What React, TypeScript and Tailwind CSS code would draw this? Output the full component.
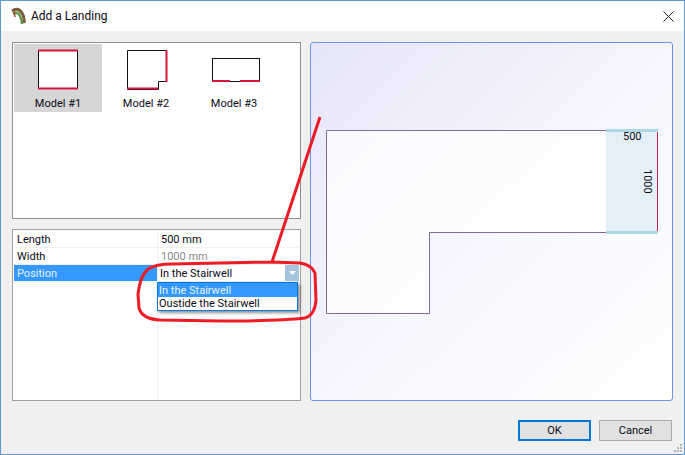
const font = { fontFamily: 'Roboto, "Noto Sans", sans-serif' };

function ModelIcon({ label, selected, children }: { label: string; selected?: boolean; children: React.ReactNode }) {
  return (
    <div className={`w-[88px] h-[68px] flex flex-col items-center ${selected ? "bg-[#d6d6d6]" : ""}`}>
      <svg width="88" height="52" viewBox="0 0 88 52" className="block">
        {children}
      </svg>
      <div className="text-[11px] leading-[16px] text-[#0a0a14]">{label}</div>
    </div>
  );
}

function PropRow({ name, value, active, muted }: { name: string; value?: string; active?: boolean; muted?: boolean }) {
  return (
    <div className={`h-[17px] flex text-[11px] leading-[18px] border-b border-[#f0f0f0] ${active ? "bg-[#3399ff] text-[#e8f2ff]" : "text-[#0a0a14]"}`}>
      <div className="w-[143px] pl-[3px] shrink-0">{name}</div>
      <div className={`flex-1 pl-[4px] ${muted ? "text-[#8a8a8a]" : ""}`}>{value}</div>
    </div>
  );
}

export default function App() {
  return (
    <div className="relative w-[685px] h-[455px] overflow-hidden bg-[#f0f0f0] border border-[#5b9bd5]" style={font}>
      <div className="h-[30px] bg-white flex items-center pl-[9px] pr-[10px]">
        <svg width="16" height="20" viewBox="0 0 16 20" className="mr-[5px]">
          <path d="M2 5 Q8 1 12 7 Q15 12 14 17" fill="none" stroke="#7a5a3a" strokeWidth="3" />
          <path d="M3 8 Q8 5 10 10 Q12 14 12 18" fill="none" stroke="#5f9a4a" strokeWidth="2.5" />
          <path d="M4 5 L5 11" stroke="#a04a30" strokeWidth="1.5" />
        </svg>
        <span className="text-[12px] text-[#0a0a14]">Add a Landing</span>
        <svg width="11" height="11" viewBox="0 0 11 11" className="ml-auto">
          <path d="M0.5 0.5 L10.5 10.5 M10.5 0.5 L0.5 10.5" stroke="#222" strokeWidth="1" />
        </svg>
      </div>

      <div className="flex gap-[9px] pl-[11px] pr-[11px] pt-[11px]">
        <div className="w-[289px] flex flex-col gap-[10px]">
          <div className="h-[177px] bg-white border border-[#8e8f94] p-[1px] flex">
            <ModelIcon label="Model #1" selected>
              <rect x="24.5" y="6.5" width="39" height="38" fill="white" stroke="#111" />
              <path d="M24 6.5 H64 M24 44.5 H64" stroke="#d4163c" strokeWidth="2" />
            </ModelIcon>
            <ModelIcon label="Model #2">
              <path d="M25.5 6.5 H64.5 V37.5 H56.5 V45.5 H25.5 Z" fill="white" stroke="#111" />
              <path d="M64.5 6 V38 M25 44.5 H56" stroke="#d4163c" strokeWidth="2" />
            </ModelIcon>
            <ModelIcon label="Model #3">
              <rect x="22.5" y="14.5" width="47" height="23" fill="white" stroke="#111" />
              <path d="M22 37 H40 M50 37 H70" stroke="#d4163c" strokeWidth="2" />
            </ModelIcon>
          </div>
          <div className="h-[172px] bg-white border border-[#a0a0a0] p-[1px] relative">
            <PropRow name="Length" value="500 mm" />
            <PropRow name="Width" value="1000 mm" muted />
            <PropRow name="Position" active />
            <div className="absolute left-[144px] top-0 bottom-0 w-px bg-[#f0f0f0]" />
            <div className="absolute left-[145px] top-[35px] w-[141px] h-[16px] bg-white flex text-[11px] leading-[17px] text-[#0a0a14]">
              <span className="pl-[2px] flex-1">In the Stairwell</span>
              <span className="w-[14px] bg-[#a8c4dc] flex items-center justify-center">
                <svg width="7" height="4" viewBox="0 0 7 4"><path d="M0 0 H7 L3.5 4 Z" fill="#fff" /></svg>
              </span>
            </div>
            <div className="absolute left-[144px] top-[52px] w-[141px] h-[29px] bg-white border border-[#0078d7] shadow-[2px_2px_3px_rgba(0,0,0,0.45)] text-[11px] text-[#0a0a14]">
              <div className="bg-[#3399ff] text-[#e8f2ff] pl-[1px] h-[14px] leading-[15px]">In the Stairwell</div>
              <div className="pl-[1px] h-[13px] leading-[13px]">Oustide the Stairwell</div>
            </div>
          </div>
        </div>

        <div className="relative w-[363px] h-[359px] border border-[#6495ed] rounded-[3px] bg-gradient-to-br from-[#e6e6fa] via-[#f6f6fe] to-white overflow-hidden">
          <svg width="361" height="357" viewBox="0 0 361 357" className="absolute left-0 top-0">
            <path d="M15.5 87.5 H346.5 V189.5 H118.5 V270.5 H15.5 Z" fill="white" fillOpacity="0.75" stroke="#7f6b96" />
            <rect x="295" y="87" width="52" height="103" fill="#e4f0f7" />
            <path d="M346.5 88 V189" stroke="#c8204a" />
            <path d="M295 87.5 H347 M295 189.5 H347" stroke="#add8e6" strokeWidth="3" />
          </svg>
          <span className="absolute left-[312px] top-[87px] text-[11px] leading-[14px] text-[#0a0a14]">500</span>
          <span className="absolute left-[329px] top-[126px] text-[11px] leading-[14px] text-[#0a0a14] rotate-90 origin-top-left translate-x-[14px]">1000</span>
        </div>
      </div>

      <div className="flex justify-end gap-[8px] pr-[12px] pt-[19px]">
        <button className="w-[73px] h-[21px] bg-[#e1e1e1] border-2 border-[#0078d7] text-[11px] leading-[16px] text-[#0a0a14]">OK</button>
        <button className="w-[73px] h-[21px] bg-[#e1e1e1] border border-[#adadad] text-[11px] leading-[16px] text-[#0a0a14]">Cancel</button>
      </div>

      <svg width="12" height="12" viewBox="0 0 12 12" className="absolute right-0 bottom-0">
        <g fill="#b5b5b5">
          <rect x="8" y="2" width="2" height="2" />
          <rect x="5" y="5" width="2" height="2" />
          <rect x="8" y="5" width="2" height="2" />
          <rect x="2" y="8" width="2" height="2" />
          <rect x="5" y="8" width="2" height="2" />
          <rect x="8" y="8" width="2" height="2" />
        </g>
      </svg>

      <svg width="685" height="455" viewBox="0 0 685 455" className="absolute -left-px -top-px pointer-events-none">
        <path
          d="M320 117 L272 262 L300 263 Q312 265 315 273 L316 300 Q315 315 305 318 Q280 321 220 321 L160 320 Q142 319 139 308 L138 294 Q140 276 148 269 Q156 264 172 264 L272 262"
          fill="none"
          stroke="#ed1c24"
          strokeWidth="3"
        />
      </svg>
    </div>
  );
}
